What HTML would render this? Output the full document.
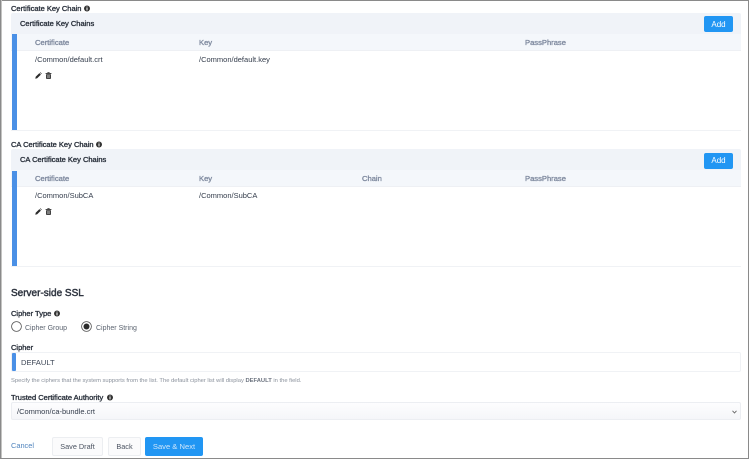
<!DOCTYPE html>
<html><head><meta charset="utf-8">
<style>
html,body{margin:0;padding:0;background:#fff}
#p{position:relative;width:749px;height:459px;overflow:hidden;background:#fff;font-family:"Liberation Sans",sans-serif;color:#3a4150}
#c{left:0;top:0;width:749px;height:459px;filter:blur(.35px)}
#p div,#p svg{position:absolute}
.t{white-space:nowrap;line-height:10px;margin-top:1px}
.lb{font-size:7.5px;color:#2b323d;-webkit-text-stroke:.35px #2b323d}
.th{font-size:7.6px;color:#7f8a9f;-webkit-text-stroke:.35px #7f8a9f}
.td{font-size:7.5px;color:#333c4b}
.btn{border-radius:2px;text-align:center;box-sizing:border-box;white-space:nowrap}
</style></head><body>
<div id="p">
<div id="c">
<!-- section 1 -->
<div class="t lb" style="left:11px;top:3px">Certificate Key Chain</div>
<svg style="left:84px;top:4.5px" width="6" height="7" viewBox="0 0 6 7"><circle cx="3" cy="3.5" r="3" fill="#333"/><rect x="2.5" y="3" width="1" height="2.4" fill="#fff"/><rect x="2.5" y="1.6" width="1" height="1" fill="#fff"/></svg>
<div style="left:11px;top:13px;width:730px;height:21px;background:#f0f3f8;border-radius:2px 2px 0 0"></div>
<div class="t lb" style="left:20px;top:18px">Certificate Key Chains</div>
<div class="btn" style="left:704px;top:16px;width:29px;height:16px;background:#2196f3;color:#fff;font-size:8px;line-height:17px">Add</div>
<div style="left:11px;top:34px;width:730px;height:17px;background:#f4f7fb;border-bottom:1px solid #eef0f4;box-sizing:border-box"></div>
<div style="left:12px;top:34px;width:4.5px;height:96px;background:#4a90e6"></div>
<div class="t th" style="left:35px;top:37px">Certificate</div>
<div class="t th" style="left:199px;top:37px">Key</div>
<div class="t th" style="left:525px;top:37px">PassPhrase</div>
<div class="t td" style="left:35px;top:54px">/Common/default.crt</div>
<div class="t td" style="left:199px;top:54px">/Common/default.key</div>
<svg style="left:35px;top:71.5px" width="7" height="7" viewBox="0 0 7 7"><path d="M0.3 6.7 L0.7 4.8 L4.4 1.1 L5.9 2.6 L2.2 6.3 Z M4.9 0.6 L5.4 0.2 L6.8 1.6 L6.4 2.1 Z" fill="#2b2b2b"/></svg>
<svg style="left:45px;top:71.5px" width="7" height="7" viewBox="0 0 7 7"><path d="M0.6 1 H2.2 L2.6 .3 H4.4 L4.8 1 H6.4 V1.9 H.6 Z M1.1 2.3 H5.9 V6.4 Q5.9 6.9 5.4 6.9 H1.6 Q1.1 6.9 1.1 6.4 Z" fill="#2b2b2b"/><path d="M2.5 3V6M3.5 3V6M4.5 3V6" stroke="#fff" stroke-width=".4"/></svg>
<div style="left:11px;top:130px;width:730px;height:1px;background:#f0f2f5"></div>

<!-- section 2 -->
<div class="t lb" style="left:11px;top:139px">CA Certificate Key Chain</div>
<svg style="left:96px;top:141px" width="6" height="7" viewBox="0 0 6 7"><circle cx="3" cy="3.5" r="3" fill="#333"/><rect x="2.5" y="3" width="1" height="2.4" fill="#fff"/><rect x="2.5" y="1.6" width="1" height="1" fill="#fff"/></svg>
<div style="left:11px;top:149px;width:730px;height:21px;background:#f0f3f8;border-radius:2px 2px 0 0"></div>
<div class="t lb" style="left:20px;top:154px">CA Certificate Key Chains</div>
<div class="btn" style="left:704px;top:153px;width:29px;height:16px;background:#2196f3;color:#fff;font-size:8px;line-height:16px">Add</div>
<div style="left:11px;top:170px;width:730px;height:17px;background:#f4f7fb;border-bottom:1px solid #eef0f4;box-sizing:border-box"></div>
<div style="left:12px;top:171px;width:4.5px;height:96px;background:#4a90e6"></div>
<div class="t th" style="left:35px;top:173px">Certificate</div>
<div class="t th" style="left:199px;top:173px">Key</div>
<div class="t th" style="left:362px;top:173px">Chain</div>
<div class="t th" style="left:525px;top:173px">PassPhrase</div>
<div class="t td" style="left:35px;top:190px">/Common/SubCA</div>
<div class="t td" style="left:199px;top:190px">/Common/SubCA</div>
<svg style="left:35px;top:208px" width="7" height="7" viewBox="0 0 7 7"><path d="M0.3 6.7 L0.7 4.8 L4.4 1.1 L5.9 2.6 L2.2 6.3 Z M4.9 0.6 L5.4 0.2 L6.8 1.6 L6.4 2.1 Z" fill="#2b2b2b"/></svg>
<svg style="left:45px;top:208px" width="7" height="7" viewBox="0 0 7 7"><path d="M0.6 1 H2.2 L2.6 .3 H4.4 L4.8 1 H6.4 V1.9 H.6 Z M1.1 2.3 H5.9 V6.4 Q5.9 6.9 5.4 6.9 H1.6 Q1.1 6.9 1.1 6.4 Z" fill="#2b2b2b"/><path d="M2.5 3V6M3.5 3V6M4.5 3V6" stroke="#fff" stroke-width=".4"/></svg>
<div style="left:11px;top:266px;width:730px;height:1px;background:#f0f2f5"></div>

<!-- server-side -->
<div class="t" style="left:11px;top:287px;font-size:10px;color:#2f3540;-webkit-text-stroke:.45px #2f3540;line-height:12px">Server-side SSL</div>
<div class="t lb" style="left:11px;top:308px">Cipher Type</div>
<svg style="left:54px;top:310px" width="6" height="7" viewBox="0 0 6 7"><circle cx="3" cy="3.5" r="3" fill="#333"/><rect x="2.5" y="3" width="1" height="2.4" fill="#fff"/><rect x="2.5" y="1.6" width="1" height="1" fill="#fff"/></svg>
<svg style="left:11px;top:320.5px" width="11" height="11" viewBox="0 0 11 11"><circle cx="5.5" cy="5.5" r="4.9" fill="#fff" stroke="#555" stroke-width=".8"/></svg>
<div class="t" style="left:25px;top:323px;font-size:7px;color:#5c6470">Cipher Group</div>
<svg style="left:81px;top:320.5px" width="11" height="11" viewBox="0 0 11 11"><circle cx="5.5" cy="5.5" r="4.9" fill="#fff" stroke="#555" stroke-width=".8"/><circle cx="5.5" cy="5.5" r="3" fill="#2b2b2b"/></svg>
<div class="t" style="left:96px;top:323px;font-size:7px;color:#5c6470">Cipher String</div>

<div class="t lb" style="left:11px;top:342px">Cipher</div>
<div style="left:11px;top:352px;width:730px;height:20px;box-sizing:border-box;border:1px solid #f0f2f5;border-radius:2px;background:#fff"></div>
<div style="left:12px;top:353px;width:4px;height:18px;background:#4a90e6;border-radius:1px"></div>
<div class="t" style="left:21px;top:357px;font-size:7.6px;color:#3d4656">DEFAULT</div>
<div class="t" style="left:11px;top:374.5px;font-size:5.8px;color:#8a919c">Specify the ciphers that the system supports from the list. The default cipher list will display <b style="color:#6d7480">DEFAULT</b> in the field.</div>

<div class="t lb" style="left:11px;top:392px">Trusted Certificate Authority</div>
<svg style="left:107px;top:394px" width="6" height="7" viewBox="0 0 6 7"><circle cx="3" cy="3.5" r="3" fill="#333"/><rect x="2.5" y="3" width="1" height="2.4" fill="#fff"/><rect x="2.5" y="1.6" width="1" height="1" fill="#fff"/></svg>
<div style="left:11px;top:402px;width:730px;height:18px;box-sizing:border-box;border:1px solid #eceef2;border-radius:2px;background:linear-gradient(#fdfdfe,#f5f6f9)"></div>
<div class="t td" style="left:17px;top:405.5px">/Common/ca-bundle.crt</div>
<svg style="left:732px;top:410px" width="5" height="4" viewBox="0 0 5 4"><path d="M.5 .8 L2.5 3 L4.5 .8" fill="none" stroke="#666" stroke-width=".9"/></svg>

<!-- footer -->
<div class="t" style="left:11px;top:440px;font-size:7.4px;color:#4f83bd">Cancel</div>
<div class="btn" style="left:52px;top:437px;width:51px;height:19px;border:1px solid #eceef1;background:#fbfbfc;font-size:7.3px;line-height:18px;color:#4a5260">Save Draft</div>
<div class="btn" style="left:108px;top:437px;width:33px;height:19px;border:1px solid #eceef1;background:#fbfbfc;font-size:7.3px;line-height:18px;color:#4a5260">Back</div>
<div class="btn" style="left:145px;top:437px;width:58px;height:19px;background:#2196f3;font-size:7.6px;line-height:20px;color:#cfe6fb">Save &amp; Next</div>
</div>
<!-- frame -->
<div style="left:0;top:0;width:749px;height:1px;background:#8a8a8a"></div>
<div style="left:0;top:0;width:1px;height:459px;background:#8a8a8a"></div>
<div style="left:1px;top:0;width:1px;height:459px;background:#c4c4c2"></div>
<div style="left:748px;top:0;width:1px;height:459px;background:#8a8a8a"></div>
<div style="left:0;top:458px;width:749px;height:1px;background:#8a8a8a"></div>
</div>
</body></html>
